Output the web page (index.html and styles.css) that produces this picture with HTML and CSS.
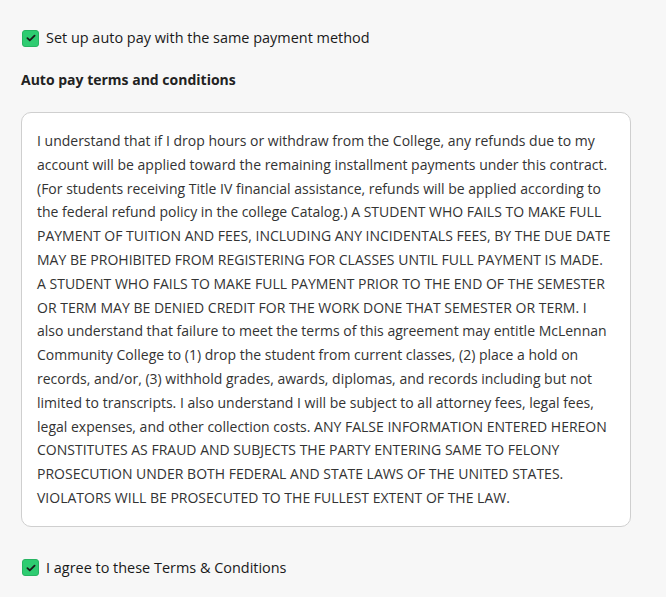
FILE: index.html
```html
<!DOCTYPE html>
<html>
<head>
<meta charset="utf-8">
<link rel="stylesheet" href="styles.css">
</head>
<body>
<div class="page">
  <label class="check-row first">
    <span class="box"><svg viewBox="0 0 16 16" width="12" height="12"><path d="M3.2 8.2 L6.4 11.3 L12.8 4.8" fill="none" stroke="#1b1b1b" stroke-width="2.4" stroke-linecap="round" stroke-linejoin="round"/></svg></span>
    <span class="label">Set up auto pay with the same payment method</span>
  </label>
  <h3 class="heading">Auto pay terms and conditions</h3>
  <div class="terms">I understand that if I drop hours or withdraw from the College, any refunds due to my account will be applied toward the remaining installment payments under this contract. (For students receiving Title IV financial assistance, refunds will be applied according to the federal refund policy in the college Catalog.) A STUDENT WHO FAILS TO MAKE FULL PAYMENT OF TUITION AND FEES, INCLUDING ANY INCIDENTALS FEES, BY THE DUE DATE MAY BE PROHIBITED FROM REGISTERING FOR CLASSES UNTIL FULL PAYMENT IS MADE. A STUDENT WHO FAILS TO MAKE FULL PAYMENT PRIOR TO THE END OF THE SEMESTER OR TERM MAY BE DENIED CREDIT FOR THE WORK DONE THAT SEMESTER OR TERM. I also understand that failure to meet the terms of this agreement may entitle McLennan Community College to (1) drop the student from current classes, (2) place a hold on records, and/or, (3) withhold grades, awards, diplomas, and records including but not limited to transcripts. I also understand I will be subject to all attorney fees, legal fees, legal expenses, and other collection costs. ANY FALSE INFORMATION ENTERED HEREON CONSTITUTES AS FRAUD AND SUBJECTS THE PARTY ENTERING SAME TO FELONY PROSECUTION UNDER BOTH FEDERAL AND STATE LAWS OF THE UNITED STATES. VIOLATORS WILL BE PROSECUTED TO THE FULLEST EXTENT OF THE LAW.</div>
  <label class="check-row last">
    <span class="box"><svg viewBox="0 0 16 16" width="12" height="12"><path d="M3.2 8.2 L6.4 11.3 L12.8 4.8" fill="none" stroke="#1b1b1b" stroke-width="2.4" stroke-linecap="round" stroke-linejoin="round"/></svg></span>
    <span class="label">I agree to these Terms &amp; Conditions</span>
  </label>
</div>
</body>
</html>
```
FILE: styles.css
```css
html, body {
  margin: 0;
  padding: 0;
  background: #f7f7f7;
}
body {
  font-family: "Open Sans", "Noto Sans", sans-serif;
  color: #222;
}
.page {
  padding: 28px 35px 0 21px;
}
.check-row {
  display: flex;
  align-items: center;
  gap: 7px;
  padding-left: 1px;
  height: 20px;
}
.box {
  width: 15px;
  height: 15px;
  background: #2ecc71;
  border: 1px solid #27b462;
  border-radius: 3px;
  display: flex;
  align-items: center;
  justify-content: center;
}
.label {
  font-size: 14.45px;
  line-height: 20px;
  color: #1a1a1a;
}
.heading {
  margin: 22px 0 0;
  font-size: 14px;
  font-weight: 700;
  color: #222;
  line-height: 20px;
}
.terms {
  margin-top: 22px;
  background: #fff;
  border: 1px solid #cfcfcf;
  border-radius: 10px;
  padding: 16px 15px 16px 15px;
  font-size: 14px;
  line-height: 23.8px;
  color: #333;
}
.last {
  margin-top: 31px;
}
```
